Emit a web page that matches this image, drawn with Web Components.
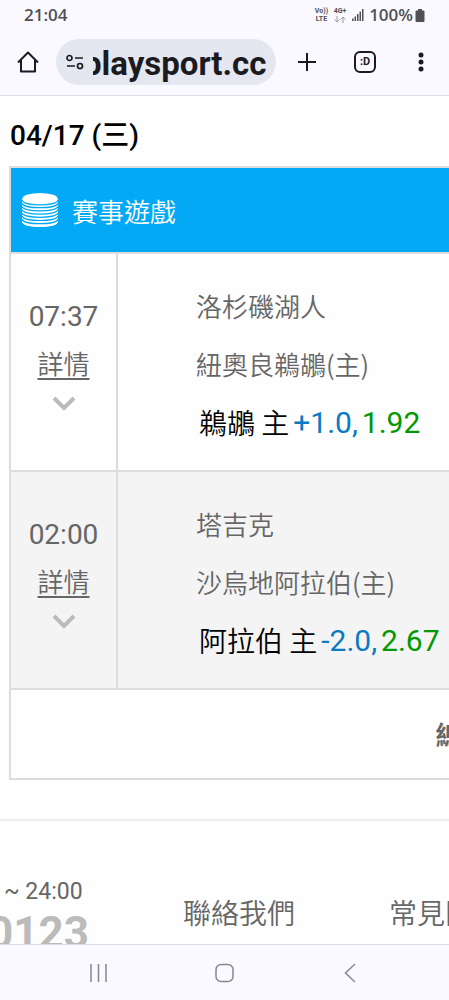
<!DOCTYPE html>
<html lang="zh-Hant">
<head>
<meta charset="utf-8">
<meta name="viewport" content="width=device-width, initial-scale=1">
<title>playsport.cc</title>
<style>
  body {
    margin: 0;
    font-family: Roboto, "Noto Sans CJK TC", sans-serif;
    color: #666;
    background: #fefefe;
  }
</style>
</head>
<body>
<phone-screen>
  <status-bar slot="top" time="21:04" battery="100%"></status-bar>
  <browser-bar slot="top" url="playsport.cc"></browser-bar>
  <game-day date="04/17 (三)" game="賽事遊戲" summary="總">
    <bet-row time="07:37" away="洛杉磯湖人" home="紐奧良鵜鶘(主)" pick="鵜鶘 主" line="+1.0," odds="1.92"></bet-row>
    <bet-row time="02:00" away="塔吉克" home="沙烏地阿拉伯(主)" pick="阿拉伯 主" line="-2.0," odds="2.67"></bet-row>
  </game-day>
  <site-footer></site-footer>
  <nav-bar slot="bottom"></nav-bar>
</phone-screen>

<script>
/* Outer frame: fixed bars at top and bottom, clipped page between them. */
class PhoneScreen extends HTMLElement {
  constructor() {
    super();
    this.attachShadow({ mode: "open" }).innerHTML = `
      <style>
        :host {
          display: flex;
          flex-direction: column;
          height: 100vh;
          overflow: hidden;
        }
        header, footer { flex: none; background: #f9f9ff; }
        header { border-bottom: 1px solid #dedee6; }
        footer { border-top: 1px solid #dadae2; }
        main { flex: 1; min-height: 0; overflow: hidden; }
      </style>
      <header><slot name="top"></slot></header>
      <main><slot></slot></main>
      <footer><slot name="bottom"></slot></footer>
    `;
  }
}

class StatusBar extends HTMLElement {
  connectedCallback() {
    this.attachShadow({ mode: "open" }).innerHTML = `
      <style>
        :host {
          display: flex;
          align-items: center;
          justify-content: space-between;
          height: 30px;
          padding: 0 24px;
          color: #505055;
          font: 600 17px/30px "Open Sans", sans-serif;
        }
        .right { display: flex; align-items: center; gap: 5px; }
        .tiny {
          font: 700 7px/8px Roboto, sans-serif;
          text-align: center;
        }
        .tiny span { display: block; }
        .level { display: flex; align-items: center; gap: 2px; }
        svg { display: block; fill: #505055; }
      </style>
      <span>${this.getAttribute("time")}</span>
      <div class="right">
        <div class="tiny"><span>Vo))</span><span>LTE</span></div>
        <div class="tiny">
          <span>4G+</span>
          <svg width="14" height="8" viewBox="0 0 14 8" style="fill:none;stroke:#9a9aa0">
            <path d="M4 1v6M1.500 4.500 4 7l2.500-2.500M10 8V2M7.500 4.500 10 2l2.500 2.500"/>
          </svg>
        </div>
        <svg width="12" height="12" viewBox="0 0 12 12">
          <path d="M0 9.500h1.500V12H0zM2.500 7.500H4V12H2.500zM5 5h1.500v7H5zM7.500 2.500H9V12H7.500zM10 0h1.500v12H10z"/>
        </svg>
        <div class="level">
          <span>${this.getAttribute("battery")}</span>
          <svg width="10" height="13" viewBox="0 0 10 13">
            <path d="M3 0h4v1.500h1.500a1 1 0 0 1 1 1V12a1 1 0 0 1-1 1h-7a1 1 0 0 1-1-1V2.500a1 1 0 0 1 1-1H3z"/>
          </svg>
        </div>
      </div>
    `;
  }
}

class BrowserBar extends HTMLElement {
  connectedCallback() {
    const shadow = this.attachShadow({ mode: "open" });
    shadow.innerHTML = `
      <style>
        :host {
          display: flex;
          align-items: center;
          height: 65px;
          box-sizing: border-box;
          padding: 0 0 2px;
        }
        button {
          flex: none;
          display: flex;
          align-items: center;
          justify-content: center;
          width: 56px;
          height: 48px;
          padding: 0;
          border: 0;
          background: none;
          font: 700 11px/12px Roboto, sans-serif;
          color: #1b1b1f;
        }
        .address {
          flex: 1;
          min-width: 0;
          display: flex;
          align-items: center;
          height: 46px;
          border-radius: 23px;
          background: #e4e7f0;
        }
        .address button { width: 37px; }
        input {
          flex: 1;
          min-width: 0;
          height: 46px;
          margin-right: 10px;
          padding: 4px 0 0;
          border: 0;
          box-sizing: border-box;
          outline: 0;
          background: none;
          color: #1b1b1f;
          font: 700 33px/42px Roboto, sans-serif;
        }
        .plus { width: 61px; }
        .tabs span {
          box-sizing: border-box;
          width: 22px;
          height: 22px;
          border: 2px solid #1b1b1f;
          border-radius: 6px;
          line-height: 17px;
        }
        svg { display: block; fill: none; stroke: #1b1b1f; stroke-width: 2; }
      </style>
      <button aria-label="Home">
        <svg width="22" height="22" viewBox="0 0 22 22"><path d="M1 11.500 11 1.500 21 11.500M4 9v11.500h14V9" stroke-linejoin="round"/></svg>
      </button>
      <div class="address">
        <button aria-label="Site settings">
          <svg width="18" height="16" viewBox="0 0 18 16" style="stroke-width:1.7">
            <circle cx="3.500" cy="4" r="2.500"/><path d="M9 4h8M1 12h8"/><circle cx="14" cy="12" r="2.500"/>
          </svg>
        </button>
        <input type="text" aria-label="Address" value="${this.getAttribute("url")}">
      </div>
      <button class="plus" aria-label="New tab">
        <svg width="20" height="20" viewBox="0 0 20 20"><path d="M10 1v18M1 10h18"/></svg>
      </button>
      <button class="tabs" aria-label="Tabs"><span>:D</span></button>
      <button class="more" aria-label="Menu">
        <svg width="6" height="20" viewBox="0 0 6 20" style="fill:#1b1b1f;stroke:none">
          <circle cx="3" cy="3" r="2.500"/><circle cx="3" cy="10" r="2.500"/><circle cx="3" cy="17" r="2.500"/>
        </svg>
      </button>
    `;
    // Long hosts are shown from their end
    const input = shadow.querySelector("input");
    input.scrollLeft = input.scrollWidth;
  }
}

/* One day of picks; the rows are slotted bet-row elements. */
class GameDay extends HTMLElement {
  connectedCallback() {
    this.attachShadow({ mode: "open" }).innerHTML = `
      <style>
        :host { display: block; padding: 0 9px; }
        h2 {
          margin: 0;
          padding: 20px 1px 10px;
          font-size: 28px;
          line-height: 40px;
          font-weight: 500;
          color: #000;
        }
        section {
          box-sizing: border-box;
          width: 204%;
          border: 2px solid #ddd;
        }
        h3 {
          display: flex;
          align-items: center;
          gap: 14px;
          height: 84px;
          margin: 0;
          padding: 0 11px;
          background: #03a9f5;
          color: #fff;
          font-size: 26px;
          font-weight: 350;
        }
        .total {
          border-top: 2px solid #ddd;
          padding: 26px 0 22px;
          margin: 0;
          text-align: center;
          font-size: 26px;
          line-height: 40px;
          font-weight: 700;
        }
      </style>
      <h2>${this.getAttribute("date")}</h2>
      <section>
        <h3>
          <svg width="36" height="36" viewBox="0 0 36 36">
            <path fill="#fff" d="M0 7v23c0 3 8 5 18 5s18-2 18-5V7z"/>
            <path fill="#03a9f5" d="M0 0h36v7H0z"/>
            <ellipse cx="18" cy="6.500" rx="17.500" ry="5.500" fill="#fff"/>
            <g fill="none" stroke="#03a9f5" stroke-width="1.200">
              <path d="M0 8c1 6.500 35 6.500 36 0M0 11.200c1 6 35 6 36 0M0 14.400c1 6 35 6 36 0M0 17.600c1 6 35 6 36 0M0 20.800c1 6 35 6 36 0M0 24c1 6 35 6 36 0M0 27.200c1 6 35 6 36 0"/>
            </g>
          </svg>
          ${this.getAttribute("game")}
        </h3>
        <slot></slot>
        <p class="total">${this.getAttribute("summary")}</p>
      </section>
    `;
  }
}

class BetRow extends HTMLElement {
  connectedCallback() {
    const at = (name) => this.getAttribute(name);
    this.attachShadow({ mode: "open" }).innerHTML = `
      <style>
        :host { display: block; border-top: 2px solid #ddd; }
        :host(:nth-child(even)) { background: #f4f4f4; }
        table { width: 100%; border-collapse: collapse; }
        td { padding: 0; vertical-align: middle; }
        .when {
          width: 105px;
          padding-bottom: 12px;
          border-right: 2px solid #ddd;
          text-align: center;
          font-size: 28px;
          line-height: 50px;
        }
        .when a {
          display: block;
          color: inherit;
          font-size: 26px;
          font-weight: 350;
          line-height: 46px;
          text-decoration-thickness: 2px;
          text-underline-offset: 4px;
        }
        .when svg {
          display: block;
          margin: 8px auto;
          fill: none;
          stroke: #bbb;
          stroke-width: 4;
        }
        .teams {
          padding: 23px 0 19px 78px;
          font: 350 26px/58px "Noto Sans CJK TC", sans-serif;
        }
        .teams div { height: 58px; }
        .teams .pick {
          display: flex;
          gap: 4px;
          padding-left: 3px;
          color: #000;
          font-size: 28px;
          white-space: nowrap;
        }
        .line, .odds { font: 400 30px/60px Roboto, sans-serif; }
        .line { color: #0a7ac4; }
        .odds { color: #090; }
      </style>
      <table>
        <tr>
          <td class="when">
            ${at("time")}
            <a href="#">詳情</a>
            <svg width="24" height="16" viewBox="0 0 24 16"><path d="M2 2 12 12 22 2"/></svg>
          </td>
          <td class="teams">
            <div>${at("away")}</div>
            <div>${at("home")}</div>
            <div class="pick"><span>${at("pick")}</span><span class="line">${at("line")}</span><span class="odds">${at("odds")}</span></div>
          </td>
        </tr>
      </table>
    `;
  }
}

class SiteFooter extends HTMLElement {
  constructor() {
    super();
    this.attachShadow({ mode: "open" }).innerHTML = `
      <style>
        :host {
          display: flex;
          margin-top: 39px;
          padding-top: 56px;
          border-top: 2px solid #eee;
          white-space: nowrap;
        }
        .service { flex: none; width: 183px; }
        .hours { margin: 0; padding-left: 4px; font-size: 23px; line-height: 30px; }
        .phone {
          margin: 0 0 0 -12px;
          font-size: 44px;
          line-height: 52px;
          font-weight: 700;
          color: #bbb;
        }
        nav { display: flex; gap: 94px; padding-top: 16px; }
        a {
          color: inherit;
          text-decoration: none;
          font-size: 28px;
          font-weight: 350;
          line-height: 44px;
        }
      </style>
      <div class="service">
        <p class="hours">~ 24:00</p>
        <p class="phone">0123</p>
      </div>
      <nav>
        <a href="#">聯絡我們</a>
        <a href="#">常見問題</a>
      </nav>
    `;
  }
}

class NavBar extends HTMLElement {
  constructor() {
    super();
    this.attachShadow({ mode: "open" }).innerHTML = `
      <style>
        :host { display: flex; justify-content: center; gap: 70px; height: 55px; }
        button {
          display: flex;
          align-items: center;
          justify-content: center;
          width: 56px;
          padding: 0;
          border: 0;
          background: none;
        }
        svg { display: block; fill: none; stroke: #88888c; stroke-width: 1.500; }
      </style>
      <button aria-label="Recent apps">
        <svg width="20" height="20" viewBox="0 0 20 20"><path d="M2 1v18M9.500 1v18M17 1v18"/></svg>
      </button>
      <button aria-label="Home">
        <svg width="20" height="20" viewBox="0 0 20 20"><rect x="1" y="1.500" width="17" height="17" rx="5"/></svg>
      </button>
      <button aria-label="Back">
        <svg width="20" height="20" viewBox="0 0 20 20"><path d="M14 1 4.500 10 14 19"/></svg>
      </button>
    `;
  }
}

customElements.define("phone-screen", PhoneScreen);
customElements.define("status-bar", StatusBar);
customElements.define("browser-bar", BrowserBar);
customElements.define("game-day", GameDay);
customElements.define("bet-row", BetRow);
customElements.define("site-footer", SiteFooter);
customElements.define("nav-bar", NavBar);
</script>
</body>
</html>
